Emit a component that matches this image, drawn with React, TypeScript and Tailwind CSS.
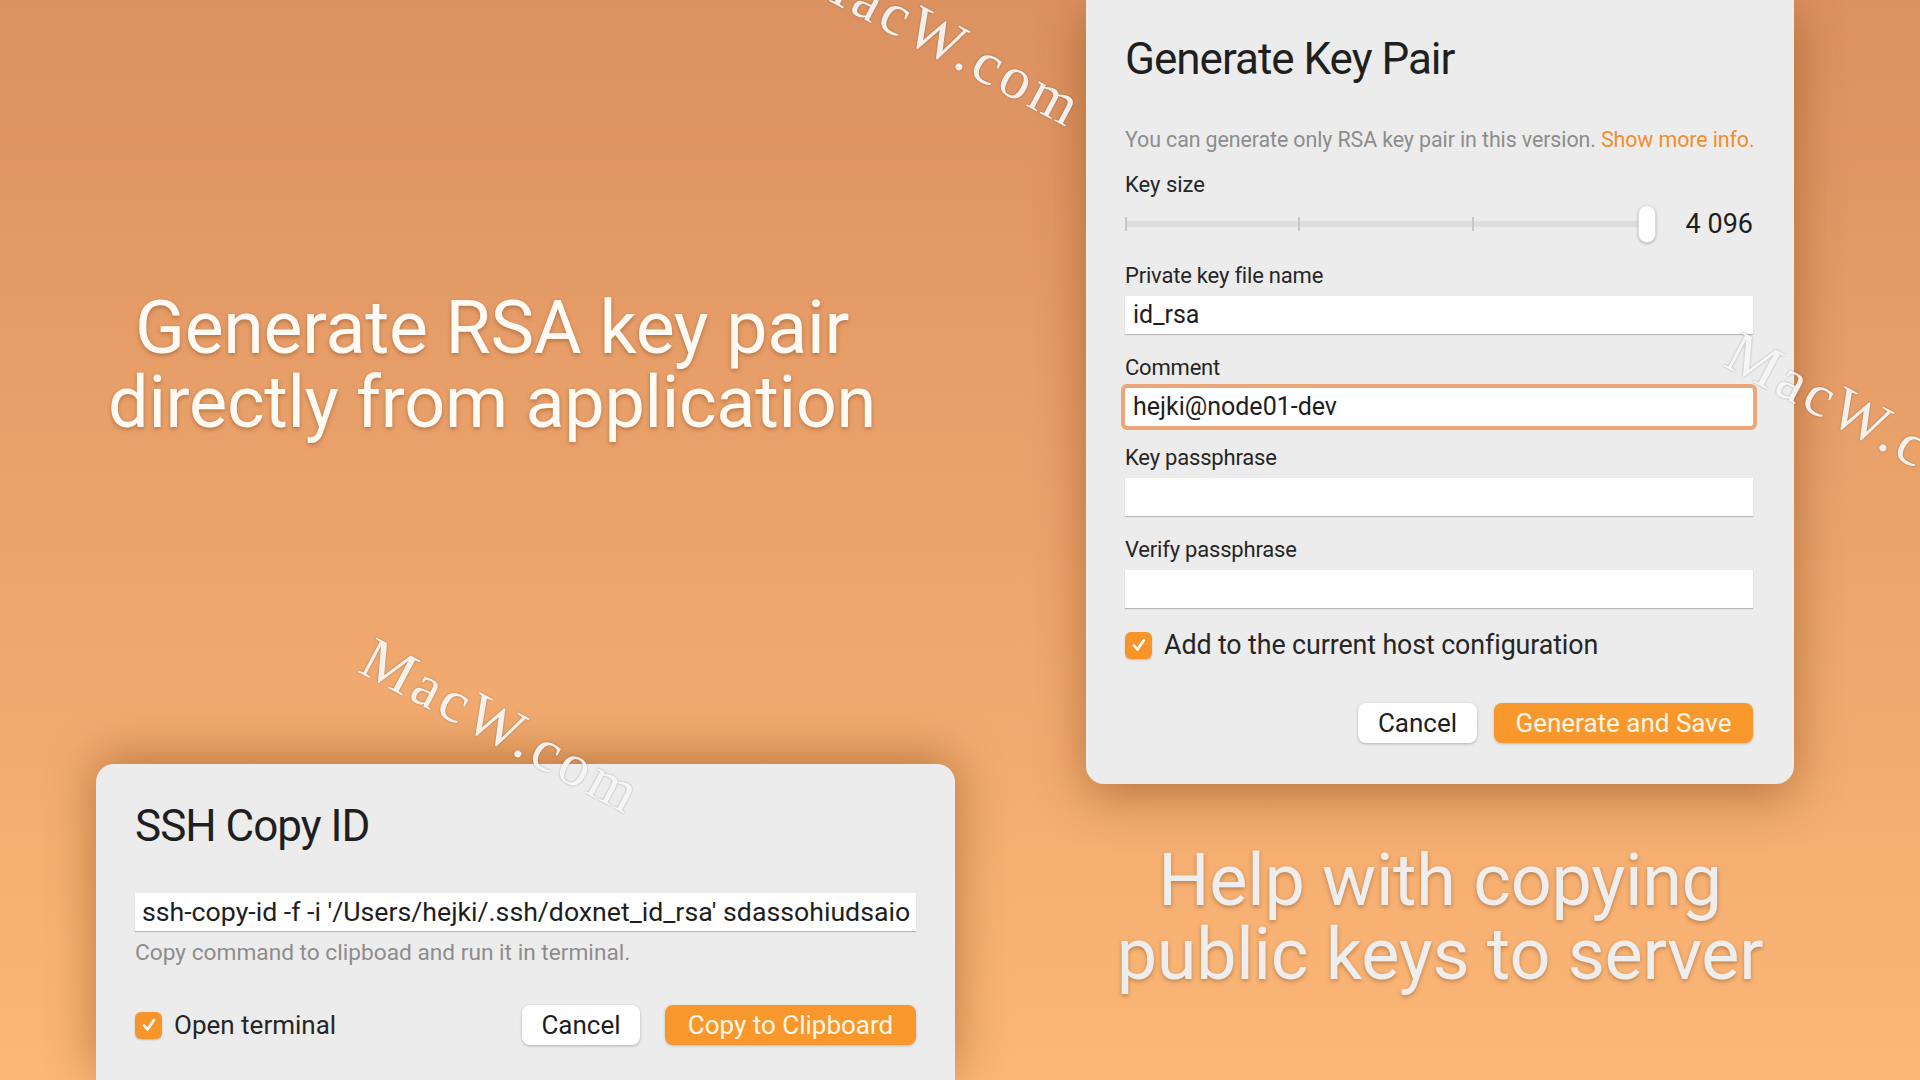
import React from 'react';

const Checkbox: React.FC = () => (
  <div className="flex h-[27px] w-[27px] shrink-0 items-center justify-center rounded-[6px] bg-[#f7952b] shadow-[0_1px_2px_rgba(0,0,0,0.2)]">
    <svg width="18" height="18" viewBox="0 0 18 18" fill="none">
      <path d="M4 9.5 L7.5 13.5 L14 4" stroke="#ffffff" strokeWidth="2.6" strokeLinecap="round" strokeLinejoin="round" />
    </svg>
  </div>
);

const TextField: React.FC<{ value?: string; focused?: boolean }> = ({ value, focused }) => (
  <div
    className={`flex h-[38px] items-center bg-white pl-[8px] text-[25px] text-[#1e1e1e] shadow-[0_1px_1px_rgba(0,0,0,0.22)] ${
      focused ? 'rounded-[2px] outline-[4px] outline-solid outline-[#eca677]' : ''
    }`}
  >
    {value}
  </div>
);

const Field: React.FC<{ label: string; value?: string; focused?: boolean; top: string }> = ({ label, value, focused, top }) => (
  <div className={top}>
    <div className="h-[28px] text-[22px] leading-[28px] tracking-[-0.2px] text-[#262626]">{label}</div>
    <div className="mt-[6px]">
      <TextField value={value} focused={focused} />
    </div>
  </div>
);

const KeySizeSlider: React.FC = () => (
  <div className="mt-[5px] flex h-[40px] items-center">
    <div className="relative h-[40px] w-[535px]">
      <div className="absolute left-0 top-[17px] h-[6px] w-[522px] rounded-full bg-[#dddddd]" />
      <div className="absolute left-0 top-[13px] flex w-[522px] justify-between">
        <div className="h-[14px] w-[2px] bg-[#c6c6c6]" />
        <div className="h-[14px] w-[2px] bg-[#c6c6c6]" />
        <div className="h-[14px] w-[2px] bg-[#c6c6c6]" />
        <div className="h-[14px] w-[2px] bg-[#c6c6c6]" />
      </div>
      <div className="absolute left-[513px] top-[1px] h-[38px] w-[18px] rounded-full border border-[#dcdcdc] bg-white shadow-[0_1px_3px_rgba(0,0,0,0.25)]" />
    </div>
    <div className="ml-auto text-[27px] leading-[40px] text-[#1e1e1e]">4 096</div>
  </div>
);

const KeyPairDialog: React.FC = () => (
  <div className="h-[784px] w-[708px] rounded-b-[18px] bg-[#ececec] pl-[39px] pr-[41px] pt-[37px] shadow-[0_12px_50px_rgba(110,50,0,0.45)]">
    <div className="h-[44px] text-[44px] leading-[44px] tracking-[-1px] text-[#1f1f1f]">Generate Key Pair</div>
    <div className="mt-[45px] h-[28px] whitespace-nowrap text-[21.4px] leading-[28px] tracking-[-0.1px] text-[#8d8d8d]">
      You can generate only RSA key pair in this version. <span className="text-[#f08f2c]">Show more info.</span>
    </div>
    <div className="mt-[17px] h-[28px] text-[22px] leading-[28px] text-[#262626]">Key size</div>
    <KeySizeSlider />
    <Field top="mt-[18px]" label="Private key file name" value="id_rsa" />
    <Field top="mt-[20px]" label="Comment" value="hejki@node01-dev" focused />
    <Field top="mt-[18px]" label="Key passphrase" />
    <Field top="mt-[20px]" label="Verify passphrase" />
    <div className="mt-[23px] flex h-[28px] items-center gap-[12px]">
      <Checkbox />
      <span className="text-[26.8px] leading-[28px] tracking-[-0.1px] text-[#262626]">Add to the current host configuration</span>
    </div>
    <div className="mt-[44px] flex justify-end gap-[17px]">
      <button className="h-[40px] w-[119px] rounded-[8px] bg-white text-[26px] text-[#1e1e1e] shadow-[0_1px_3px_rgba(0,0,0,0.25)]">Cancel</button>
      <button className="h-[40px] w-[259px] rounded-[8px] bg-[#f8982c] text-[26px] text-[#fff6e6] shadow-[0_1px_3px_rgba(0,0,0,0.2)]">Generate and Save</button>
    </div>
  </div>
);

const SshCopyDialog: React.FC = () => (
  <div className="mt-auto ml-[96px] h-[316px] w-[859px] rounded-t-[18px] bg-[#ececec] pl-[39px] pr-[39px] pt-[40px] shadow-[0_-6px_50px_rgba(110,50,0,0.45)]">
    <div className="h-[44px] text-[44px] leading-[44px] tracking-[-1px] text-[#1f1f1f]">SSH Copy ID</div>
    <div className="mt-[45px] flex h-[38px] items-center overflow-hidden whitespace-nowrap bg-white pl-[7px] text-[26.7px] text-[#1e1e1e] shadow-[0_1px_1px_rgba(0,0,0,0.22)]">
      ssh-copy-id -f -i '/Users/hejki/.ssh/doxnet_id_rsa' sdassohiudsaio
    </div>
    <div className="mt-[9px] h-[26px] text-[22.7px] leading-[26px] text-[#8d8d8d]">Copy command to clipboad and run it in terminal.</div>
    <div className="mt-[39px] flex h-[40px] items-center">
      <Checkbox />
      <span className="ml-[12px] text-[26px] text-[#262626]">Open terminal</span>
      <div className="ml-auto flex gap-[25px]">
        <button className="h-[40px] w-[118px] rounded-[8px] bg-white text-[26px] text-[#1e1e1e] shadow-[0_1px_3px_rgba(0,0,0,0.25)]">Cancel</button>
        <button className="h-[40px] w-[251px] rounded-[8px] bg-[#f8982c] text-[26px] text-[#fff6e6] shadow-[0_1px_3px_rgba(0,0,0,0.2)]">Copy to Clipboard</button>
      </div>
    </div>
  </div>
);

const Watermark: React.FC<{ className: string }> = ({ className }) => (
  <div
    className={`pointer-events-none absolute origin-top-left rotate-[28deg] whitespace-nowrap font-['Liberation_Serif',serif] text-[60px] leading-none tracking-[4px] text-white/90 [text-shadow:0_0_2px_rgba(0,0,0,0.35)] ${className}`}
  >
    MacW.com
  </div>
);

export default function App() {
  return (
    <div className="relative h-[1080px] w-[1920px] overflow-hidden bg-linear-to-b from-[#dc9161] to-[#fcb776] font-[Roboto,sans-serif]">
      <div className="flex h-full">
        <div className="flex w-[1086px] flex-col">
          <h1 className="ml-[96px] mt-[291px] w-[792px] text-center text-[72px] leading-[74px] tracking-[-0.3px] text-[#fffaf4] [text-shadow:0_2px_4px_rgba(90,40,0,0.35)]">
            <span className="text-[73.5px]">Generate RSA key pair</span>
            <br />
            directly from application
          </h1>
          <SshCopyDialog />
        </div>
        <div className="flex w-[708px] flex-col">
          <KeyPairDialog />
          <h2 className="mt-[60px] text-center text-[72px] leading-[74px] tracking-[-0.3px] text-[#eeeeee] [text-shadow:0_2px_4px_rgba(90,40,0,0.35)]">
            Help with copying
            <br />
            public keys to server
          </h2>
        </div>
      </div>
      <Watermark className="left-[821px] top-[-60px]" />
      <Watermark className="left-[380px] top-[627px]" />
      <Watermark className="left-[1745px] top-[321px]" />
    </div>
  );
}
